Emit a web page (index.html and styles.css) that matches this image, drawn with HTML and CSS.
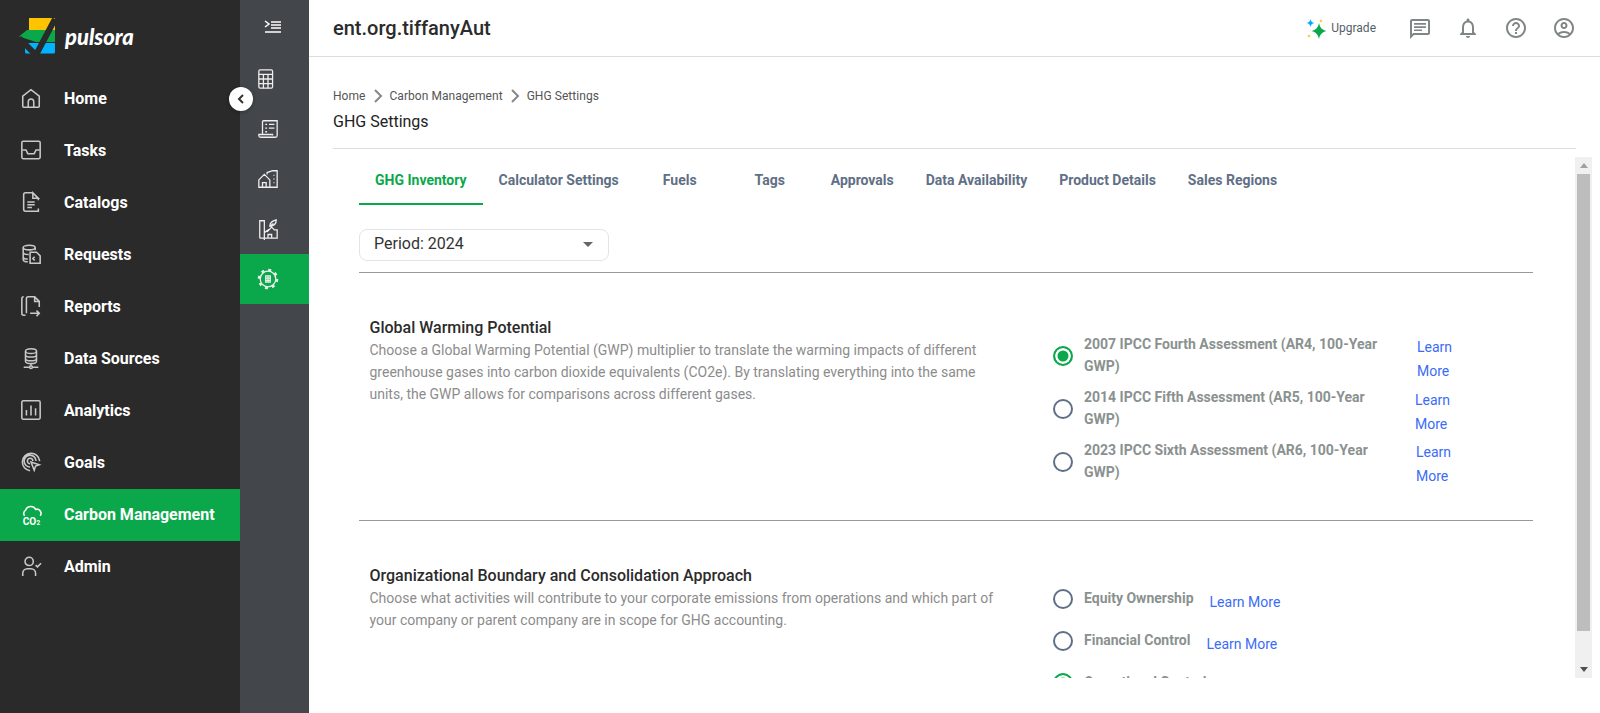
FILE: index.html
```html
<!DOCTYPE HTML>
<html>
<head>
<title>GHG Settings</title>
<meta charset="utf-8" />
<link rel="stylesheet" href="styles.css">
</head>
<body>
<div class="sidebar">
  <div class="logo">
    <svg class="logo-mark" width="38" height="38" viewBox="0 0 38 38">
      <path d="M11 1h26v12H11z" fill="#ffc400"/>
      <path d="M9 13h28v12H18L1 19.500z" fill="#0aa84a"/>
      <path d="M7 26h30v9a1.500 1.500 0 0 1-1.500 1.500H8.500A1.500 1.500 0 0 1 7 35z" fill="#00b4ff"/>
      <path d="M1 21L18 38L37 2" fill="none" stroke="#2a2a2a" stroke-width="6"/>
    </svg>
    <span class="logo-text">pulsora</span>
  </div>
  <ul class="nav">
    <li><svg viewBox="0 0 24 24"><path d="M3 21V10l9-7 9 7v11a1 1 0 0 1-1 1H4a1 1 0 0 1-1-1zM9 22v-6a3 3 0 0 1 6 0v6"/></svg>Home</li>
    <li><svg viewBox="0 0 24 24"><rect x="2" y="2.500" width="20" height="19" rx="1.500"/><path d="M2.500 12h4l2 4h7l2-4h4"/></svg>Tasks</li>
    <li><svg viewBox="0 0 24 24"><path d="M14 2H6a2 2 0 0 0-2 2v16a2 2 0 0 0 2 2h12M14 2l6 6h-6zM20 8v2M20 19v3h-2M8 12h8M8 15h8M8 18h5"/></svg>Catalogs</li>
    <li><svg viewBox="0 0 24 24"><ellipse cx="10" cy="5" rx="6.500" ry="2.500"/><path d="M3.500 5v13c0 1.500 2 2.500 5 2.500M16.500 5v3M3.500 10c0 1.500 3 2.500 6 2.500M3.500 15c0 1.500 2 2.500 5 2.500"/><path d="M11 10h7l4 4v8h-11zM16 15l-2 2 2 2"/></svg>Requests</li>
    <li><svg viewBox="0 0 24 24"><path d="M6 22H4a2 2 0 0 1-2-2V4a2 2 0 0 1 2-2M7 20V4a2 2 0 0 1 2-2h7l5 5v6M16 2v5h5M11 20h10M18 17l3 3-3 3"/></svg>Reports</li>
    <li><svg viewBox="0 0 24 24"><ellipse cx="12" cy="4.500" rx="6" ry="2.500"/><path d="M6 4.500v11c0 1.500 3 2.500 6 2.500s6-1 6-2.500v-11M6 8.500c0 1.500 3 2.500 6 2.500s6-1 6-2.500M6 12.500c0 1.500 3 2.500 6 2.500s6-1 6-2.500M12 18v2M4 22h6M14 22h6"/><circle cx="12" cy="22" r="1.500"/></svg>Data Sources</li>
    <li><svg viewBox="0 0 24 24"><rect x="2" y="2" width="20" height="20" rx="1.500"/><path d="M7 12v6M12 7v11M17 10v8"/></svg>Analytics</li>
    <li><svg viewBox="0 0 24 24"><path d="M11 21.500A9.500 9.500 0 1 1 21.500 11M11 17.500A6.500 6.500 0 1 1 17.500 11M11 14a3 3 0 1 1 3-3"/><path d="M12 12l9 3-4 1.500-1.500 4.500z"/></svg>Goals</li>
    <li class="active"><svg viewBox="0 0 24 24"><path d="M5 14a4 4 0 0 1 1-6 6 6 0 0 1 11-1 4.500 4.500 0 0 1 5 7"/><text x="3" y="23.500" class="co2">CO</text><text x="18" y="23.500" class="co2-sub">2</text></svg>Carbon Management</li>
    <li><svg viewBox="0 0 24 24"><circle cx="10" cy="7" r="4.500"/><path d="M3 23v-3a5 5 0 0 1 5-5h4a5 5 0 0 1 5 5v3M17 11l2 2 4-4"/></svg>Admin</li>
  </ul>
  <button class="collapse" aria-label="Collapse">
    <svg width="12" height="12" viewBox="0 0 12 12"><path d="M8 2L4 6l4 4" fill="none" stroke="#333" stroke-width="2"/></svg>
  </button>
</div>
<div class="subnav">
  <div class="subnav-toggle">
    <svg width="18" height="14" viewBox="0 0 18 14"><path d="M1 1l4 3-4 3M7 2h10M7 5h10M7 8h10M1 12h16" fill="none" stroke="#fff" stroke-width="1.500"/></svg>
  </div>
  <div class="subnav-item"><svg viewBox="0 0 24 24"><rect x="2" y="2" width="15" height="20" rx="1.500"/><path d="M2 7h15M2 12h15M2 17h15M7 7v15M12 7v15"/></svg></div>
  <div class="subnav-item"><svg viewBox="0 0 24 24"><path d="M6 18V4a1 1 0 0 1 1-1h15v16a2 2 0 0 1-2 2H4a2 2 0 0 1-2-2v-1h15v1M9 7h2M13 7h6M9 11h2M13 11h6M9 15h2"/></svg></div>
  <div class="subnav-item"><svg viewBox="0 0 24 24"><path d="M2 21v-8l6-6 6 6v8zM6 21v-5h4v5M11 7V5l6-2h5v18h-8M18 8h1M18 12h1M18 16h1"/></svg></div>
  <div class="subnav-item"><svg viewBox="0 0 24 24"><path d="M3 22V3h5v13M3 22h19v-9h-3l-3-3-4 4v-1l-4 3v8M12 22v-4h4v4M14 9c0-4 3-6 7-7 0 4-2 7-7 7zM14 9l4-3"/></svg></div>
  <div class="subnav-item active"><svg viewBox="0 0 24 24"><circle cx="12" cy="12" r="8.500"/><circle class="cog" cx="12" cy="12" r="10"/><path d="M9.500 8.500h5v7h-5zM9.500 11h5M9.500 13.500h5M12 8.500v7"/></svg></div>
</div>
<div class="main">
  <div class="topbar">
    <h1 class="org">ent.org.tiffanyAut</h1>
    <div class="top-actions">
      <div class="upgrade">
        <svg width="21" height="21" viewBox="0 0 21 21">
          <path d="M13 5c1 4.500 2.500 6.500 7.500 8-5 1.500-6.500 3.500-7.500 8-1-4.500-2.500-6.500-7.500-8 5-1.500 6.500-3.500 7.500-8z" fill="#0aa84a"/>
          <path d="M4.500 1c.500 2.500 1.300 3.300 4 4-2.700.700-3.500 1.500-4 4-.500-2.500-1.300-3.300-4-4 2.700-.700 3.500-1.500 4-4z" fill="#00a8ff"/>
          <path d="M15 1c.200 1.200.600 1.600 2 2-1.400.400-1.800.800-2 2-.200-1.200-.600-1.600-2-2 1.400-.400 1.800-.800 2-2zM3 16c.200 1.200.600 1.600 2 2-1.400.400-1.800.800-2 2-.200-1.200-.600-1.600-2-2 1.400-.400 1.800-.800 2-2z" fill="#ffc400"/>
        </svg>
        Upgrade
      </div>
      <svg class="top-icon" viewBox="0 0 24 24"><path d="M20 3H4c-1.100 0-2 .9-2 2v18l4-4h14c1.100 0 2-.9 2-2V5c0-1.100-.9-2-2-2zm0 14H5.200L4 18.200V5h16v12z"/><path d="M6 7h12v1.700H6zM6 10.200h12v1.700H6zM6 13.400h8v1.700H6z"/></svg>
      <svg class="top-icon" viewBox="0 0 24 24"><path d="M12 22c1.100 0 2-.9 2-2h-4c0 1.100.9 2 2 2zm6-6v-5c0-3.070-1.630-5.640-4.500-6.320V4c0-.83-.67-1.500-1.500-1.500s-1.500.67-1.500 1.500v.68C7.640 5.360 6 7.920 6 11v5l-2 2v1h16v-1l-2-2zm-2 1H8v-6c0-2.480 1.510-4.500 4-4.500s4 2.020 4 4.500v6z"/></svg>
      <svg class="top-icon" viewBox="0 0 24 24"><path d="M11 18h2v-2h-2v2zm1-16C6.480 2 2 6.480 2 12s4.480 10 10 10 10-4.480 10-10S17.520 2 12 2zm0 18c-4.410 0-8-3.590-8-8s3.590-8 8-8 8 3.590 8 8-3.590 8-8 8zm0-14c-2.210 0-4 1.790-4 4h2c0-1.100.9-2 2-2s2 .9 2 2c0 2-3 1.750-3 5h2c0-2.250 3-2.500 3-5 0-2.210-1.790-4-4-4z"/></svg>
      <svg class="top-icon" viewBox="0 0 24 24"><path d="M12 2C6.480 2 2 6.480 2 12s4.480 10 10 10 10-4.480 10-10S17.520 2 12 2zM7.350 18.500C8.660 17.560 10.260 17 12 17s3.340.56 4.650 1.500c-1.310.94-2.910 1.500-4.650 1.500s-3.340-.56-4.650-1.500zm10.790-1.380C16.450 15.800 14.320 15 12 15s-4.450.8-6.140 2.120C4.700 15.730 4 13.950 4 12c0-4.420 3.580-8 8-8s8 3.580 8 8c0 1.950-.7 3.730-1.860 5.120z"/><path d="M12 6c-1.930 0-3.500 1.570-3.500 3.500S10.070 13 12 13s3.500-1.570 3.500-3.500S13.930 6 12 6zm0 5c-.83 0-1.500-.67-1.500-1.500S11.170 8 12 8s1.500.67 1.500 1.500S12.830 11 12 11z"/></svg>
    </div>
  </div>
  <div class="page-head">
    <div class="crumbs">
      <span>Home</span>
      <svg class="crumb-sep" viewBox="0 3 24 18"><path d="M9 6l6 6-6 6"/></svg>
      <span>Carbon Management</span>
      <svg class="crumb-sep" viewBox="0 3 24 18"><path d="M9 6l6 6-6 6"/></svg>
      <span>GHG Settings</span>
    </div>
    <div class="page-title">GHG Settings</div>
  </div>
  <div class="scroll-wrap">
    <div class="scroller">
      <div class="tabs">
        <a class="tab active">GHG Inventory</a>
        <a class="tab">Calculator Settings</a>
        <a class="tab">Fuels</a>
        <a class="tab">Tags</a>
        <a class="tab">Approvals</a>
        <a class="tab">Data Availability</a>
        <a class="tab">Product Details</a>
        <a class="tab">Sales Regions</a>
      </div>
      <div class="period">Period: 2024<span class="caret"></span></div>

      <div class="section first">
        <div class="info">
          <h3>Global Warming Potential</h3>
          <p>Choose a Global Warming Potential (GWP) multiplier to translate the warming impacts of different greenhouse gases into carbon dioxide equivalents (CO2e). By translating everything into the same units, the GWP allows for comparisons across different gases.</p>
        </div>
        <div class="options gwp">
          <div class="option">
            <span class="radio checked"></span>
            <span class="label">2007 IPCC Fourth Assessment (AR4, 100-Year GWP)</span>
            <a class="learn">Learn More</a>
          </div>
          <div class="option">
            <span class="radio"></span>
            <span class="label">2014 IPCC Fifth Assessment (AR5, 100-Year GWP)</span>
            <a class="learn nudge">Learn More</a>
          </div>
          <div class="option">
            <span class="radio"></span>
            <span class="label">2023 IPCC Sixth Assessment (AR6, 100-Year GWP)</span>
            <a class="learn nudge-sm">Learn More</a>
          </div>
        </div>
      </div>

      <div class="section">
        <div class="info">
          <h3>Organizational Boundary and Consolidation Approach</h3>
          <p>Choose what activities will contribute to your corporate emissions from operations and which part of your company or parent company are in scope for GHG accounting.</p>
        </div>
        <div class="options boundary">
          <div class="option">
            <span class="radio"></span>
            <span class="label">Equity Ownership</span>
            <a class="learn">Learn More</a>
          </div>
          <div class="option">
            <span class="radio"></span>
            <span class="label">Financial Control</span>
            <a class="learn">Learn More</a>
          </div>
          <div class="option">
            <span class="radio checked"></span>
            <span class="label">Operational Control</span>
            <a class="learn">Learn More</a>
          </div>
        </div>
      </div>
    </div>
    <div class="scrollbar">
      <div class="sb-btn"><span class="sb-up"></span></div>
      <div class="sb-thumb"></div>
      <div class="sb-btn sb-end"><span class="sb-down"></span></div>
    </div>
  </div>
</div>
</body>
</html>
```

FILE: styles.css
```css
*{
  margin:0;
  padding:0;
  box-sizing:border-box;
}
html,body{
  height:100%;
  overflow:hidden;
}
body{
  display:flex;
  font-family:Roboto,"Liberation Sans",sans-serif;
  background:#fff;
  color:#2b2b2b;
}

/* left menu */
.sidebar{
  position:relative;
  width:240px;
  flex:none;
  background:#2a2a2a;
}
.logo{
  display:flex;
  align-items:center;
  height:73px;
  padding:0 0 1px 18px;
}
.logo-text{
  margin-left:9px;
  font-family:Lato,sans-serif;
  font-style:italic;
  font-weight:900;
  font-size:22px;
  color:#fff;
}
.nav{
  list-style:none;
}
.nav li{
  display:flex;
  align-items:center;
  gap:22px;
  height:52px;
  padding:0 0 2px 20px;
  font-size:16px;
  font-weight:700;
  color:#fff;
}
.nav li svg{
  width:22px;
  height:22px;
  flex:none;
  overflow:visible;
  fill:none;
  stroke:#c8c8c8;
  stroke-width:1.700;
}
.nav li.active{
  background:#0aa84a;
}
.nav li.active svg{
  stroke:#fff;
}
.nav .co2,.nav .co2-sub{
  fill:#fff;
  stroke:none;
  font-weight:700;
}
.nav .co2{
  font-size:11px;
}
.nav .co2-sub{
  font-size:7px;
}
.collapse{
  position:absolute;
  top:87px;
  left:229px;
  z-index:2;
  display:flex;
  align-items:center;
  justify-content:center;
  width:24px;
  height:24px;
  border:0;
  border-radius:50%;
  background:#fff;
  box-shadow:0 1px 4px rgba(0,0,0,.3);
}

/* second menu */
.subnav{
  width:69px;
  flex:none;
  background:#43474b;
}
.subnav-toggle{
  display:flex;
  align-items:center;
  justify-content:center;
  height:54px;
  padding:0 3px 0 0;
}
.subnav-item{
  display:flex;
  align-items:center;
  height:50px;
  padding-left:17px;
}
.subnav-item svg{
  width:22px;
  height:22px;
  fill:none;
  stroke:#eee;
  stroke-width:1.400;
}
.subnav-item .cog{
  stroke-width:2.400;
  stroke-dasharray:3.200 4.650;
}
.subnav-item.active{
  background:#0aa84a;
}

/* main */
.main{
  flex:1;
  min-width:0;
  display:flex;
  flex-direction:column;
}
.topbar{
  display:flex;
  align-items:center;
  justify-content:space-between;
  height:57px;
  padding:0 24px;
  border-bottom:1px solid #ddd;
}
.org{
  font-size:20px;
  font-weight:500;
  color:#2b2b2b;
}
.top-actions{
  display:flex;
  align-items:center;
  gap:24px;
}
.upgrade{
  display:flex;
  align-items:center;
  gap:4px;
  margin-right:8px;
  font-size:12px;
  color:#555e6b;
}
.top-icon{
  width:24px;
  height:24px;
  fill:#7f8685;
}
.page-head{
  margin:30px 24px 8px 24px;
  padding-bottom:15px;
  border-bottom:1px solid #ddd;
}
.crumbs{
  display:flex;
  align-items:center;
  height:18px;
  font-size:12px;
  letter-spacing:.05px;
  color:#555;
}
.crumb-sep{
  width:24px;
  height:18px;
  fill:none;
  stroke:#888;
  stroke-width:2;
}
.page-title{
  margin-top:6px;
  font-size:16px;
  line-height:22px;
  color:#222;
}

/* scrolling part */
.scroll-wrap{
  display:flex;
  width:1259px;
  height:521px;
  margin-left:24px;
}
.scroller{
  flex:1;
  min-width:0;
  padding:0 42px 0 26px;
  overflow:hidden;
}
.scrollbar{
  display:flex;
  flex-direction:column;
  flex:none;
  width:17px;
  background:#f0f0f0;
}
.sb-btn{
  display:flex;
  align-items:center;
  justify-content:center;
  height:17px;
}
.sb-end{
  margin-top:auto;
}
.sb-up{
  border-left:4px solid transparent;
  border-right:4px solid transparent;
  border-bottom:5px solid #a0a0a0;
}
.sb-down{
  border-left:4px solid transparent;
  border-right:4px solid transparent;
  border-top:5px solid #505050;
}
.sb-thumb{
  height:457px;
  margin:0 2px;
  background:#bdbdbd;
}

.tabs{
  display:flex;
  height:48px;
}
.tab{
  min-width:90px;
  padding:0 16px;
  border-bottom:2px solid transparent;
  font-size:14px;
  font-weight:700;
  line-height:46px;
  text-align:center;
  color:#5f6f85;
}
.tab.active{
  color:#0aa84a;
  border-bottom-color:#0aa84a;
}
.period{
  position:relative;
  width:250px;
  height:32px;
  margin:24px 0 11px;
  padding-left:14px;
  border:1px solid #e2e4ea;
  border-radius:8px;
  font-size:16px;
  line-height:28px;
  color:#333;
}
.caret{
  position:absolute;
  top:12px;
  right:15px;
  border-left:5px solid transparent;
  border-right:5px solid transparent;
  border-top:5px solid #666;
}
.section{
  display:flex;
  padding:44px 0 0 10.500px;
  border-top:1px solid #999;
}
.section.first{
  height:248px;
}
.info{
  width:683.500px;
  padding-right:56px;
}
.info h3{
  font-size:16px;
  font-weight:500;
  line-height:22px;
  color:#2b2b2b;
}
.info p{
  font-size:14px;
  line-height:22px;
  color:#8c8c8c;
}
.options.gwp{
  padding-top:16px;
}
.options.gwp .option{
  height:53px;
}
.options.gwp .label{
  width:317px;
}
.options.gwp .learn{
  width:50px;
  margin-left:16px;
  margin-top:2px;
  line-height:24px;
}
.options.gwp .learn.nudge{
  margin-left:14px;
}
.options.gwp .learn.nudge-sm{
  margin-left:15px;
  margin-top:1px;
}
.options.boundary{
  padding:22px 0 30px;
}
.options.boundary .option{
  height:42px;
}
.option{
  display:flex;
  align-items:flex-start;
}
.radio{
  flex:none;
  width:20px;
  height:20px;
  margin:13px 11px 0 0;
  border:2px solid #5f6f85;
  border-radius:50%;
  background:#fff;
}
.boundary .radio{
  margin-top:2px;
}
.radio.checked{
  border-color:#0aa84a;
  box-shadow:inset 0 0 0 2.500px #fff;
  background:#0aa84a;
}
.label{
  font-size:14px;
  font-weight:700;
  line-height:22px;
  color:#8a918f;
}
.learn{
  font-size:14px;
  line-height:24px;
  color:#3b6cf6;
}
.boundary .learn{
  margin:3px 0 0 16px;
}
```
